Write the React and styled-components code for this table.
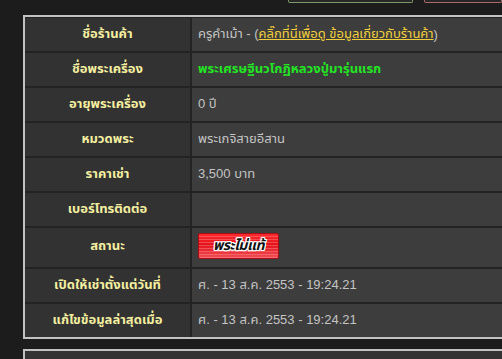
import React from "react";
import styled, { createGlobalStyle } from "styled-components";

const Global = createGlobalStyle`
  html, body { margin: 0; padding: 0; background: #1c1c1c; overflow: hidden; }
  body { font-family: Tahoma, "Liberation Sans", "Noto Sans Thai", "Loma", "Garuda", "DejaVu Sans", sans-serif; }
`;

const Page = styled.div`
  width: 502px;
  height: 359px;
  overflow: hidden;
  background: #1c1c1c;
`;

const TopBar = styled.div`
  height: 15px;
  display: flex;
`;

const TopButtons = styled.div`
  display: flex;
  gap: 11px;
  margin-left: 288px;
  height: 3px;
  overflow: hidden;
`;

const TopButton = styled.div`
  width: ${(p) => p.$w}px;
  height: 3px;
  box-sizing: border-box;
  background: #262626;
  border: 1px solid ${(p) => p.$line};
  border-top: none;
  border-radius: 0 0 2px 2px;
`;

const Panel = styled.div`
  margin-left: 23px;
  width: 540px;
  border: 2px solid #c2c2c2;
  border-right: none;
  background: #222;
  box-sizing: border-box;
`;

const Grid = styled.div`
  display: grid;
  grid-template-columns: 165px 1fr;
  column-gap: 2px;
  row-gap: 2px;
  padding-top: 1px;
  background: #232323;
`;

const Label = styled.div`
  height: ${(p) => p.$h || 33}px;
  background: #323232;
  color: #f4efa0;
  font-weight: bold;
  font-size: 13px;
  display: flex;
  align-items: center;
  justify-content: center;
  padding-bottom: ${(p) => (p.$h ? 4 : 1)}px;
  box-sizing: border-box;
`;

const Value = styled.div`
  height: ${(p) => p.$h || 33}px;
  background: #3d3d3d;
  color: ${(p) => (p.$green ? "#22e622" : "#c4c4c4")};
  font-weight: ${(p) => (p.$green ? "bold" : "normal")};
  font-size: 13px;
  display: flex;
  align-items: center;
  padding: 0 0 1px 6px;
  box-sizing: border-box;
  white-space: nowrap;
`;

const ShopLink = styled.a`
  color: #f2cf3a;
  text-decoration: underline;
  cursor: pointer;
`;

const Badge = styled.span`
  display: inline-flex;
  align-items: center;
  justify-content: center;
  width: 81px;
  height: 26px;
  margin-bottom: 3px;
  box-sizing: border-box;
  border: 1px solid #a80d12;
  border-radius: 2px;
  background:
    repeating-linear-gradient(
      180deg,
      rgba(255, 255, 255, 0) 0px,
      rgba(255, 255, 255, 0) 2px,
      rgba(255, 170, 170, 0.35) 2px,
      rgba(255, 170, 170, 0.35) 3px
    ),
    linear-gradient(180deg, #ff2a2f 0%, #e3121a 45%, #f25058 100%);
  color: #111;
  font-style: italic;
  font-weight: bold;
  font-size: 14px;
  letter-spacing: -0.5px;
  text-shadow:
    1px 0 0 #fff, -1px 0 0 #fff, 0 1px 0 #fff, 0 -1px 0 #fff,
    1px 1px 0 #fff, -1px -1px 0 #fff, 1px -1px 0 #fff, -1px 1px 0 #fff;
`;

const Gap = styled.div`
  height: 10px;
`;

const NextPanel = styled.div`
  margin-left: 23px;
  width: 540px;
  height: 40px;
  border: 2px solid #c2c2c2;
  border-right: none;
  background: #333;
  box-sizing: border-box;
`;

const rows = [
  { label: "ชื่อร้านค้า", value: "shop" },
  { label: "ชื่อพระเครื่อง", value: "พระเศรษฐีนวโกฏิหลวงปู่มารุ่นแรก", green: true },
  { label: "อายุพระเครื่อง", value: "0 ปี" },
  { label: "หมวดพระ", value: "พระเกจิสายอีสาน" },
  { label: "ราคาเช่า", value: "3,500 บาท" },
  { label: "เบอร์โทรติดต่อ", value: "" },
  { label: "สถานะ", value: "badge", h: 39 },
  { label: "เปิดให้เช่าตั้งแต่วันที่", value: "ศ. - 13 ส.ค. 2553 - 19:24.21" },
  { label: "แก้ไขข้อมูลล่าสุดเมื่อ", value: "ศ. - 13 ส.ค. 2553 - 19:24.21" },
];

function renderValue(r) {
  if (r.value === "shop") {
    return (
      <>
        ครูคำเม้า - (<ShopLink>คลิ๊กที่นี่เพื่อดู ข้อมูลเกี่ยวกับร้านค้า</ShopLink>)
      </>
    );
  }
  if (r.value === "badge") return <Badge>พระไม่แท้</Badge>;
  return r.value;
}

export default function App() {
  return (
    <Page>
      <Global />
      <TopBar>
        <TopButtons>
          <TopButton $w={129} $line="#7f9a6a" />
          <TopButton $w={80} $line="#a86a6a" />
        </TopButtons>
      </TopBar>
      <Panel>
        <Grid>
          {rows.map((r, i) => (
            <React.Fragment key={i}>
              <Label $h={r.h}>{r.label}</Label>
              <Value $h={r.h} $green={r.green}>
                {renderValue(r)}
              </Value>
            </React.Fragment>
          ))}
        </Grid>
      </Panel>
      <Gap />
      <NextPanel />
    </Page>
  );
}
